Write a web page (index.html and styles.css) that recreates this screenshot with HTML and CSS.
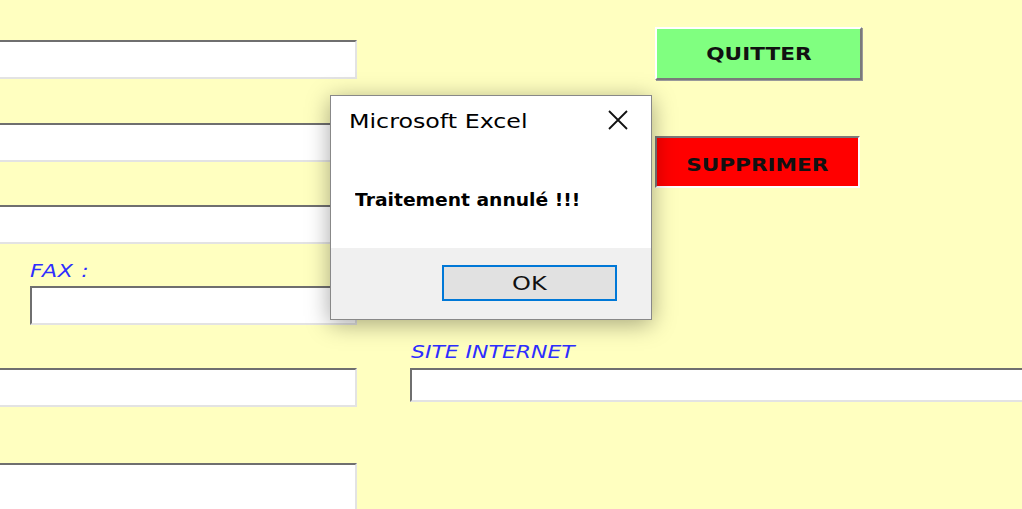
FILE: index.html
```html
<!DOCTYPE html>
<html lang="fr">
<head>
    <meta charset="UTF-8">
    <meta name="viewport" content="width=device-width, initial-scale=1.0">
    <title>Fiche client</title>
    <link rel="stylesheet" href="styles.css">
</head>
<body>
    <div class="form">
        <div class="col-left">
            <input type="text" class="field cut f1">
            <input type="text" class="field cut f2">
            <input type="text" class="field cut f3">
            <label class="lbl lbl-fax"><span class="wide">FAX :</span></label>
            <input type="text" class="field fax">
            <input type="text" class="field cut f5">
            <textarea class="field cut f6"></textarea>
        </div>
        <div class="col-right">
            <button class="btn btn-quit"><span class="wide">QUITTER</span></button>
            <button class="btn btn-del"><span class="wide">SUPPRIMER</span></button>
            <label class="lbl lbl-site"><span class="wide">SITE INTERNET</span></label>
            <input type="text" class="field site">
        </div>
    </div>

    <div class="msgbox">
        <div class="msg-title">
            <span class="wide">Microsoft Excel</span>
            <svg class="close" width="22" height="20" viewBox="0 0 22 20">
                <path d="M2 1 L20 19 M20 1 L2 19" stroke="#111" stroke-width="1.8" fill="none"/>
            </svg>
        </div>
        <div class="msg-text"><span class="wide">Traitement annulé !!!</span></div>
        <div class="msg-foot">
            <button class="ok"><span class="wide">OK</span></button>
        </div>
    </div>
</body>
</html>
```

FILE: styles.css
```css
body { margin: 0; background: #ffffc0; font-family: "DejaVu Sans", sans-serif; overflow: hidden; height: 509px; }
.form { display: grid; grid-template-columns: 357px 1fr; column-gap: 53px; }
.col-left, .col-right { display: flex; flex-direction: column; align-items: flex-start; }

/* the screen capture is stretched sideways, so the text is too */
.wide { display: inline-block; transform: scaleX(1.25); transform-origin: left center; }

.field { box-sizing: border-box; background: #fff; border: 2px solid #e3e3e3; border-top-color: #6f6f6f; border-left-color: #6f6f6f; padding: 0; margin: 0; display: block; font: inherit; resize: none; }
.cut { width: 357px; height: 39px; border-left: none; }
.f1 { margin-top: 40px; }
.f2 { margin-top: 44px; }
.f3 { margin-top: 43px; }
.fax { width: 327px; height: 39px; margin-left: 30px; }
.f5 { margin-top: 43px; }
.f6 { margin-top: 56px; height: 60px; }

.lbl { font-family: "DejaVu Sans", sans-serif; font-style: italic; font-size: 17px; color: #2e2eff; line-height: 18px; }
.lbl-fax { margin: 18px 0 6px 30px; }
.lbl-fax .wide { transform: scaleX(1.3); letter-spacing: 0.5px; }
.lbl-site { margin: 155px 0 7px 1px; }
.lbl-site .wide { transform: scaleX(1.29); }
.site { width: 620px; height: 34px; }

.btn { box-sizing: border-box; font-family: "DejaVu Sans", sans-serif; font-weight: bold; font-size: 18px; color: #111; margin-left: 245px; padding: 0; cursor: pointer; }
.btn .wide { transform: scaleX(1.2); transform-origin: center; }
.btn-quit { width: 207px; height: 53px; margin-top: 27px; background: #80ff80; border: 2px solid #fff; border-right-color: #7a7a7a; border-bottom-color: #7a7a7a; box-shadow: 1px 1px 0 #9a9a9a; }
.btn-del { width: 205px; height: 52px; margin-top: 56px; padding-top: 4px; background: #ff0000; border: 2px solid #fff; border-top-color: #7a7a7a; border-left-color: #7a7a7a; }

.msgbox { position: absolute; left: 330px; top: 95px; width: 322px; height: 225px; box-sizing: border-box; background: #fff; border: 1px solid #888; box-shadow: 0 4px 22px rgba(0, 0, 0, 0.35); display: flex; flex-direction: column; font-family: "DejaVu Sans", sans-serif; color: #000; }
.msg-title { display: flex; justify-content: space-between; align-items: center; height: 50px; padding: 0 22px 0 18px; font-size: 19px; }
.close { margin-top: -2px; }
.msg-text { padding: 44px 0 0 24px; height: 58px; font-size: 17px; font-weight: 600; }
.msg-text .wide { transform: scaleX(1.1); }
.msg-foot { flex: 1; background: #f0f0f0; display: flex; justify-content: flex-end; align-items: flex-start; padding: 17px 34px 0 0; }
.ok { box-sizing: border-box; width: 175px; height: 36px; background: #e1e1e1; border: 2px solid #0078d7; box-shadow: inset 0 0 0 1px #e1e1e1; font-family: "DejaVu Sans", sans-serif; font-size: 20px; color: #111; padding: 0; }
.ok .wide { transform: scaleX(1.2); transform-origin: center; }
```
